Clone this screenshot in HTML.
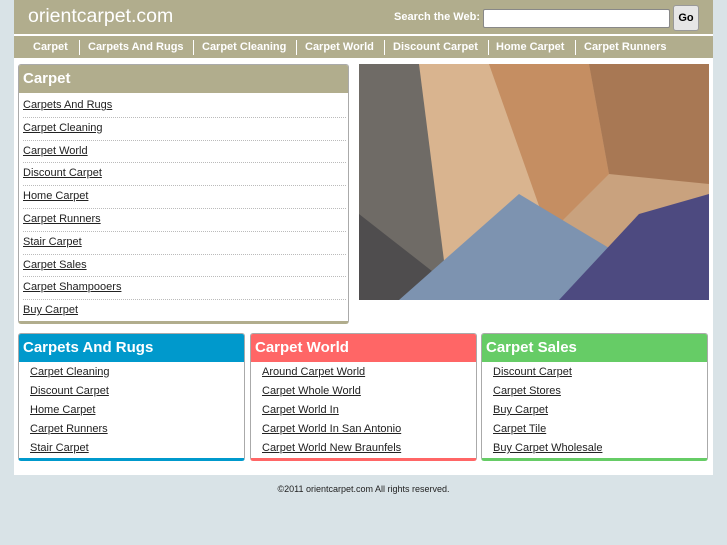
<!DOCTYPE html>
<html><head><style>
body{margin:0;background:#d9e3e7;font-family:"Liberation Sans",sans-serif;}
#w{position:absolute;left:14px;top:0;width:699px;height:475px;background:#fff;}
#hd{position:absolute;left:0;top:0;width:699px;height:34px;background:#b1ad8d;}
#hd .logo{position:absolute;left:14px;top:5px;color:#fff;font-size:19.5px;}
#hd .s{position:absolute;left:380px;top:11px;color:#fff;font-size:11px;font-weight:bold;}
#hd .in{position:absolute;left:469px;top:9px;width:185px;height:17px;background:#fff;border:1px solid #888;border-radius:2px;}
#hd .go{position:absolute;left:659px;top:5px;width:24px;height:24px;background:#e6e6e6;border:1px solid #999;border-radius:3px;font-size:11px;font-weight:bold;text-align:center;line-height:24px;}
#nav{position:absolute;left:0;top:36px;width:699px;height:22px;background:#b1ad8d;font-size:11px;font-weight:bold;color:#fff;line-height:23px;}
#nav span{position:absolute;top:0;}
#nav i{position:absolute;top:4px;width:1px;height:15px;background:#fff;}
.box{position:absolute;border:1px solid #aaa;border-radius:3px;background:#fff;overflow:hidden;}
.box h2{margin:0;height:28px;line-height:28px;color:#fff;font-size:15px;font-weight:bold;padding-left:4px;}
.lb a{display:block;color:#222;font-size:11px;margin:0 2px 0 4px;height:21.8px;line-height:21px;border-bottom:1px dotted #bbb;}
.bb a{display:block;color:#222;font-size:11px;padding-left:11px;height:19px;line-height:19px;}
a{text-decoration:underline;color:#222}
</style></head><body>
<div id="w">
<div id="hd"><div class="logo">orientcarpet.com</div><div class="s">Search the Web:</div><div class="in"></div><div class="go">Go</div></div>
<div id="nav">
<span style="left:19px">Carpet</span><i style="left:65px"></i>
<span style="left:74px">Carpets And Rugs</span><i style="left:179px"></i>
<span style="left:188px">Carpet Cleaning</span><i style="left:282px"></i>
<span style="left:291px">Carpet World</span><i style="left:370px"></i>
<span style="left:379px">Discount Carpet</span><i style="left:474px"></i>
<span style="left:482px">Home Carpet</span><i style="left:561px"></i>
<span style="left:570px">Carpet Runners</span>
</div>
<div class="box lb" style="left:4px;top:64px;width:329px;height:256px;border-bottom:3px solid #b1ad8d">
<h2 style="background:#b1ad8d">Carpet</h2><div style="height:2px"></div>
<a>Carpets And Rugs</a><a>Carpet Cleaning</a><a>Carpet World</a><a>Discount Carpet</a><a>Home Carpet</a><a>Carpet Runners</a><a>Stair Carpet</a><a>Carpet Sales</a><a>Carpet Shampooers</a><a style="border:0">Buy Carpet</a>
</div>
<svg style="position:absolute;left:345px;top:64px" width="350" height="236">
<rect width="350" height="236" fill="#c9a27e"/>
<polygon points="0,0 60,0 150,236 0,236" fill="#6f6b66"/>
<polygon points="60,0 130,0 190,170 110,236 90,236" fill="#d9b48f"/>
<polygon points="130,0 230,0 250,110 190,170" fill="#c58e62"/>
<polygon points="230,0 350,0 350,120 250,110" fill="#a87854"/>
<polygon points="0,150 110,236 0,236" fill="#4f4d4e"/>
<polygon points="40,236 160,130 260,190 230,236" fill="#7d93b0"/>
<polygon points="200,236 280,150 350,130 350,236" fill="#4d4a80"/>
</svg>
<div class="box bb" style="left:4px;top:333px;width:225px;height:124px;border-bottom:3px solid #0099cc"><h2 style="background:#0099cc">Carpets And Rugs</h2><div style="height:1px"></div><a>Carpet Cleaning</a><a>Discount Carpet</a><a>Home Carpet</a><a>Carpet Runners</a><a>Stair Carpet</a></div>
<div class="box bb" style="left:236px;top:333px;width:225px;height:124px;border-bottom:3px solid #ff6666"><h2 style="background:#ff6666">Carpet World</h2><div style="height:1px"></div><a>Around Carpet World</a><a>Carpet Whole World</a><a>Carpet World In</a><a>Carpet World In San Antonio</a><a>Carpet World New Braunfels</a></div>
<div class="box bb" style="left:467px;top:333px;width:225px;height:124px;border-bottom:3px solid #66cc66"><h2 style="background:#66cc66">Carpet Sales</h2><div style="height:1px"></div><a>Discount Carpet</a><a>Carpet Stores</a><a>Buy Carpet</a><a>Carpet Tile</a><a>Buy Carpet Wholesale</a></div>
</div>
<div style="position:absolute;left:0;width:727px;top:484px;text-align:center;font-size:9px;color:#222">©2011 orientcarpet.com All rights reserved.</div>
</body></html>
